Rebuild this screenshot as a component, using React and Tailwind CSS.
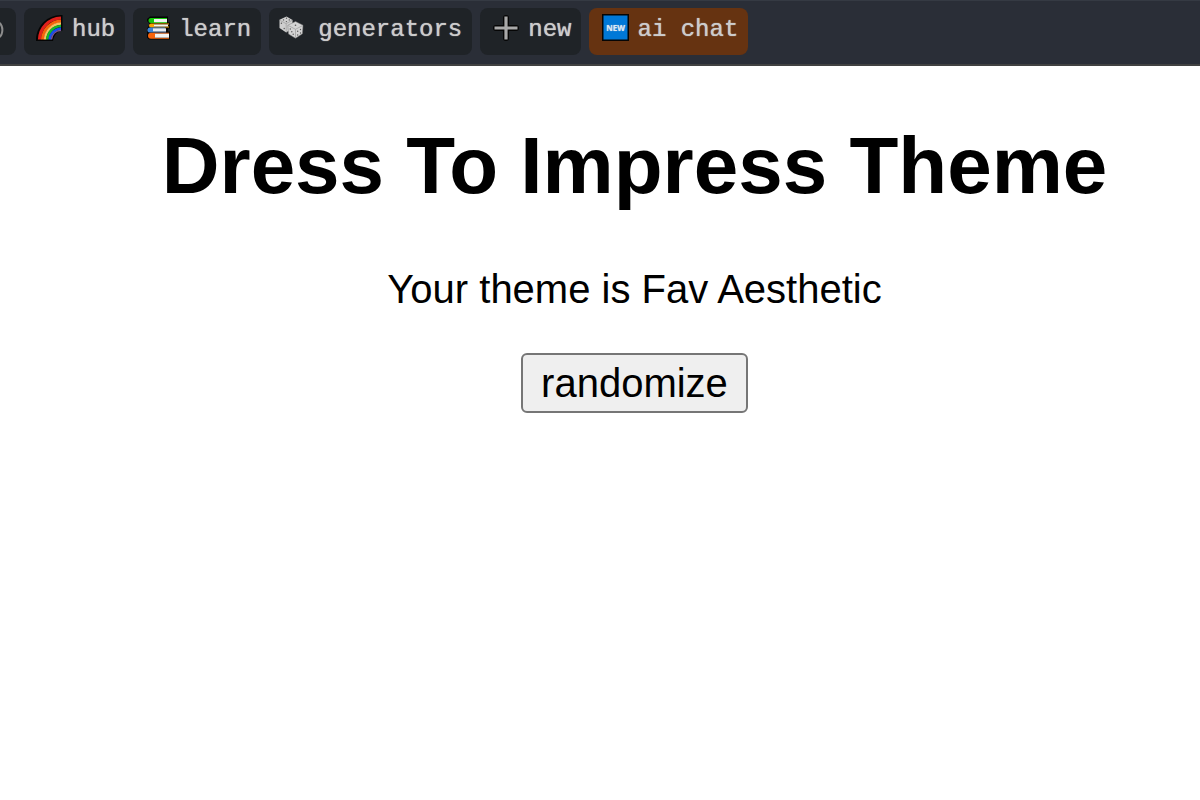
import React, { useState } from "react";

const themes = ["Fav Aesthetic", "Red Carpet", "Winter Ball", "Beach Day"];

function RainbowIcon() {
  return (
    <svg className="h-7 w-[30px] shrink-0" viewBox="0 0 30 28" fill="none" aria-hidden="true">
      <path d="M2 27V24.500C3.500 11 13 1.500 27 1h1.500v15.500c-4.500.5-8.500 4-9.500 10.500z" fill="#050505" />
      <path d="M5.500 25.500C6 14 14.500 4.500 27 4" stroke="#e0201c" strokeWidth="3.200" />
      <path d="M8.500 25.500C9 16 16.500 7.500 27 7" stroke="#f7630c" strokeWidth="3" />
      <path d="M11 25.500C11.500 17.500 18 10 27 9.500" stroke="#f5c060" strokeWidth="2.400" />
      <path d="M13.200 25.500C13.700 19 19 12.300 27 12" stroke="#16b52a" strokeWidth="2.600" />
      <path d="M15.600 25.500C16 20 20.500 15 27 14.500" stroke="#1650f0" strokeWidth="2.600" />
      <path d="M17.400 25.500c.6-5 4.300-8.800 9.600-9.300" stroke="#7a5496" strokeWidth="1.500" />
    </svg>
  );
}

function BooksIcon() {
  return (
    <svg className="h-7 w-7 shrink-0" viewBox="0 0 28 28" aria-hidden="true">
      <path d="M7 2.500h18v6h2v6h-2v3h2v8H6l-2-2v-5l1-2-1-2 2-3V9L4 7V5z" fill="#050505" />
      <path d="M8 4h16v1H11v3h13v1H8a2.500 2.500 0 0 1 0-5z" fill="#16c60c" />
      <path d="M11 5h13v3.200H11z" fill="#f2f2f2" />
      <path d="M8 9.500h18v1H11v2h15v1H8a2 2 0 0 1 0-4z" fill="#f7a500" />
      <path d="M11 10.500h14v2H11z" fill="#f2f2f2" />
      <path d="M7 13.500h15v1H10v3h13v1H7a2.500 2.500 0 0 1 0-5z" fill="#3b83d8" />
      <path d="M10 14.300h13v3.200H10z" fill="#e8edf5" />
      <path d="M8 18.700h18v1H12v4h14v1H8a3 3 0 0 1 0-6z" fill="#f7630c" />
      <path d="M12 19.700h14v4H12z" fill="#f2f2f2" />
    </svg>
  );
}

function DiceIcon() {
  return (
    <svg className="h-7 w-[31px] shrink-0" viewBox="0 0 31 28" aria-hidden="true">
      <path d="M7.500 2.500l6 3.400v8l-6.300 4.600L.5 14V5.800z" fill="#cfcfcf" />
      <path d="M.8 6.300l6.400 3.400 6-3.400M7.200 9.700v8.500" fill="none" stroke="#a2a2a2" strokeWidth=".8" />
      <path
        d="M16.500 7.500l7.500 3.700-.6 8.600-6.900 4.400-7-4.200-.7-8.800z"
        fill="#d4d4d4"
        stroke="#7d7d7d"
        strokeWidth=".5"
      />
      <path d="M9.300 11.500l7.200 3.800 7.200-3.800M16.500 15.300v8.500" fill="none" stroke="#a2a2a2" strokeWidth=".8" />
      <g fill="#585858">
        <circle cx="7.500" cy="4.300" r=".7" />
        <circle cx="4.500" cy="5.900" r=".7" />
        <circle cx="10.300" cy="5.900" r=".7" />
        <circle cx="7.400" cy="7.600" r=".7" />
        <circle cx="2.400" cy="9.300" r=".7" />
        <circle cx="5.200" cy="14.500" r=".7" />
        <circle cx="16.500" cy="11.200" r=".8" />
        <circle cx="11.300" cy="15" r=".7" />
        <circle cx="14.200" cy="20.300" r=".7" />
        <circle cx="12.800" cy="17.700" r=".7" />
        <circle cx="18.700" cy="17.200" r=".7" />
        <circle cx="21.500" cy="15.500" r=".7" />
        <circle cx="18.700" cy="21" r=".7" />
        <circle cx="21.500" cy="19" r=".7" />
      </g>
    </svg>
  );
}

function PlusIcon() {
  return (
    <svg className="h-7 w-[30px] shrink-0" viewBox="0 0 30 28" aria-hidden="true">
      <path
        d="M16 4v20M6 14h20"
        stroke="#050505"
        strokeWidth="6"
        strokeLinecap="round"
      />
      <path d="M16 2.500v23M4.500 14h23" stroke="#a9a9a9" strokeWidth="3.200" />
    </svg>
  );
}

function NewIcon() {
  return (
    <svg className="h-7 w-[30px] shrink-0" viewBox="0 0 30 28" aria-hidden="true">
      <path d="M3 0h27v27H3z" fill="#050505" />
      <path d="M4.500 1.500h24v24h-24z" fill="#0078d7" />
      <text
        x="16.500"
        y="17"
        fill="#d8e8f8"
        fontFamily="Open Sans, sans-serif"
        fontSize="8"
        fontWeight="700"
        textAnchor="middle"
      >
        NEW
      </text>
    </svg>
  );
}

const links = [
  { label: "hub", icon: RainbowIcon },
  { label: "learn", icon: BooksIcon },
  { label: "generators", icon: DiceIcon },
  { label: "new", icon: PlusIcon },
  { label: "ai chat", icon: NewIcon, highlight: true },
];

function NavBar() {
  return (
    <nav className="flex gap-2 overflow-hidden border-t border-b-2 border-t-[#353a43] border-b-[#414141] bg-[#2a2e37] pt-[7px] pb-[9px] font-['Liberation_Mono',monospace] text-2xl leading-8 text-[#cccccc] [text-shadow:0_0_1px_#cccccc]">
      <a href="#account" aria-label="account" className="w-4 shrink-0 rounded-r-lg bg-[#1f2327] pt-[6px]">
        <svg className="h-8 w-4" viewBox="0 0 16 32" fill="none" aria-hidden="true">
          <path d="M-1 8.500C3.500 12 3.500 20 -1 23.500" stroke="#8c8c8c" strokeWidth="2" />
        </svg>
      </a>
      {links.map(({ label, icon: Icon, highlight }) => (
        <a
          key={label}
          href={`#${label}`}
          className={`flex shrink-0 gap-2 rounded-lg px-[10px] pt-[6px] pb-[9px] whitespace-nowrap ${
            highlight ? "bg-[#663311]" : "bg-[#1f2327]"
          }`}
        >
          <Icon />
          <span>{label}</span>
        </a>
      ))}
    </nav>
  );
}

export default function App() {
  const [theme, setTheme] = useState(themes[0]);

  const randomize = () => {
    setTheme(themes[Math.floor(Math.random() * themes.length)]);
  };

  return (
    <div className="min-h-screen bg-white font-['Liberation_Sans',Arial,sans-serif] text-black">
      <NavBar />
      <main className="pl-[69px] text-center">
        <h1 className="mt-[54px] text-[80px] leading-[92px] font-bold">Dress To Impress Theme</h1>
        <p className="mt-[54px] text-[40px] leading-[46px]">Your theme is {theme}</p>
        <button
          type="button"
          onClick={randomize}
          className="mt-[41px] rounded-md border-2 border-[#767676] bg-[#efefef] px-[18px] py-[5px] text-[40px] leading-[46px]"
        >
          randomize
        </button>
      </main>
    </div>
  );
}
